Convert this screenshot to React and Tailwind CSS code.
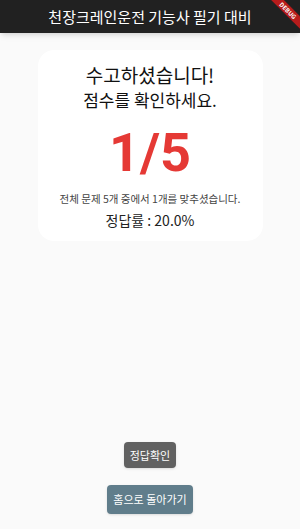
export default function App() {
  const font = { fontFamily: '"Noto Sans CJK KR", "Noto Sans", Roboto, sans-serif' }
  return (
    <div className="relative h-[529px] w-[300px] overflow-hidden bg-[#fafafa] flex flex-col" style={font}>
      {/* App bar */}
      <div className="h-[33px] bg-[#212121] flex items-center justify-center shadow-md shrink-0">
        <span className="text-white text-[15px] leading-none">천장크레인운전 기능사 필기 대비</span>
      </div>

      {/* Debug banner */}
      <div className="absolute top-[6px] right-[-18px] w-[60px] h-[9px] bg-[#b71c1c] rotate-45 flex items-center justify-center">
        <span className="text-white text-[6px] font-bold leading-none">DEBUG</span>
      </div>

      {/* Score card */}
      <div className="mt-[17px] mx-auto w-[225px] h-[191px] bg-white rounded-2xl flex flex-col items-center pt-[12px]">
        <p className="text-[19px] leading-[26px] text-[#111]">수고하셨습니다!</p>
        <p className="text-[17px] leading-[24px] text-[#111]">점수를 확인하세요.</p>
        <p className="mt-[11px] text-[54px] leading-[60px] font-bold text-[#e53935]" style={{ fontFamily: 'Roboto, "Noto Sans", sans-serif' }}>1/5</p>
        <p className="mt-[9px] text-[10.5px] leading-[14px] text-[#444]">전체 문제 5개 중에서 1개를 맞추셨습니다.</p>
        <p className="mt-[5px] text-[14px] leading-[18px] text-[#222]">정답률 : 20.0%</p>
      </div>

      <div className="flex-1" />

      {/* Buttons */}
      <div className="flex flex-col items-center pb-[15px]">
        <button className="h-[26px] px-[6px] bg-[#616161] text-white text-[11px] rounded-sm shadow">정답확인</button>
        <button className="mt-[17px] h-[29px] px-[6px] bg-[#607d8b] text-white text-[11px] rounded-sm shadow">홈으로 돌아가기</button>
      </div>
    </div>
  )
}
